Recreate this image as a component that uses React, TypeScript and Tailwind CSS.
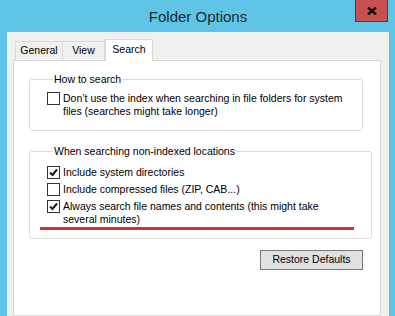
import React from 'react'

const font = { fontFamily: '"Liberation Sans", Arial, sans-serif' }

function CheckBox({ checked }: { checked: boolean }) {
  return (
    <span className="flex h-[13px] w-[13px] shrink-0 items-center justify-center border border-[#333333] bg-white">
      {checked && (
        <svg width="9" height="9" viewBox="0 0 9 9" fill="none">
          <path d="M1 4.5 L3.5 7 L8 1.5" stroke="#1a1a1a" strokeWidth="2" />
        </svg>
      )}
    </span>
  )
}

function Option({ checked, children }: { checked: boolean; children: React.ReactNode }) {
  return (
    <label className="flex items-start gap-[3px]">
      <CheckBox checked={checked} />
      <span className="text-[10.5px] leading-[13px] text-black">{children}</span>
    </label>
  )
}

export default function App() {
  return (
    <div className="relative h-[316px] w-[395px] overflow-hidden bg-white" style={font}>
      <div className="flex h-full flex-col bg-[#5fc4e6] px-[7px] pr-[6px] pt-[2px]">
        {/* Title bar */}
        <div className="flex h-[30px] items-center justify-center">
          <span className="text-[15px] text-[#1f2a30]">Folder Options</span>
        </div>
        <button className="absolute right-[7px] top-0 flex h-[22px] w-[33px] items-center justify-center border border-[#5a3a3a] border-t-0 bg-[#c75050]">
          <svg width="10" height="8" viewBox="0 0 10 8">
            <path d="M1 0.5 L9 7.5 M9 0.5 L1 7.5" stroke="#111" strokeWidth="2.4" />
          </svg>
        </button>

        {/* Client area */}
        <div className="flex flex-1 flex-col bg-[#f0f0f0] pl-[6px] pr-[8px] pt-[7px]">
          {/* Tabs */}
          <div className="flex h-[21px] items-end">
            <div className="ml-[2px] flex h-[19px] w-[48px] items-center justify-center border border-b-0 border-[#d9d9d9] bg-[#f0f0f0] text-[10.5px] text-black">
              General
            </div>
            <div className="flex h-[19px] w-[42px] items-center justify-center border border-b-0 border-l-0 border-[#d9d9d9] bg-[#f0f0f0] text-[10.5px] text-black">
              View
            </div>
            <div className="relative z-10 -mb-px flex h-[22px] w-[48px] items-start justify-center border border-b-0 border-[#d9d9d9] bg-white pt-[2px] text-[10.5px] text-black">
              Search
            </div>
          </div>

          {/* Tab page */}
          <div className="flex flex-1 flex-col border border-[#d9d9d9] bg-white pl-[15px] pr-[17px] pt-[12px]">
            <fieldset className="rounded-[3px] border border-[#dcdcdc] px-[17px] pb-[12px] pt-[6px]">
              <legend className="ml-[6px] px-[1px] text-[10.5px] leading-[13px] text-black">How to search</legend>
              <Option checked={false}>
                Don’t use the index when searching in file folders for system
                <br />
                files (searches might take longer)
              </Option>
            </fieldset>

            <fieldset className="mt-[14px] rounded-[3px] border border-[#dcdcdc] px-[17px] pb-[8px] pt-[8px]">
              <legend className="ml-[6px] px-[1px] text-[10.5px] leading-[13px] text-black">
                When searching non-indexed locations
              </legend>
              <div className="flex flex-col gap-[4px]">
                <Option checked={true}>Include system directories</Option>
                <Option checked={false}>Include compressed files (ZIP, CAB...)</Option>
                <Option checked={true}>
                  Always search file names and contents (this might take
                  <br />
                  several minutes)
                </Option>
              </div>
              <div className="-ml-[7px] mt-[1px] h-[3px] w-[314px] bg-[#d12f3c]" />
            </fieldset>

            <div className="mt-[11px] flex justify-end">
              <button className="h-[20px] w-[103px] border border-[#7a7a7a] bg-[#e1e1e1] text-[10.5px] text-black">
                Restore Defaults
              </button>
            </div>
          </div>
        </div>
      </div>
    </div>
  )
}
